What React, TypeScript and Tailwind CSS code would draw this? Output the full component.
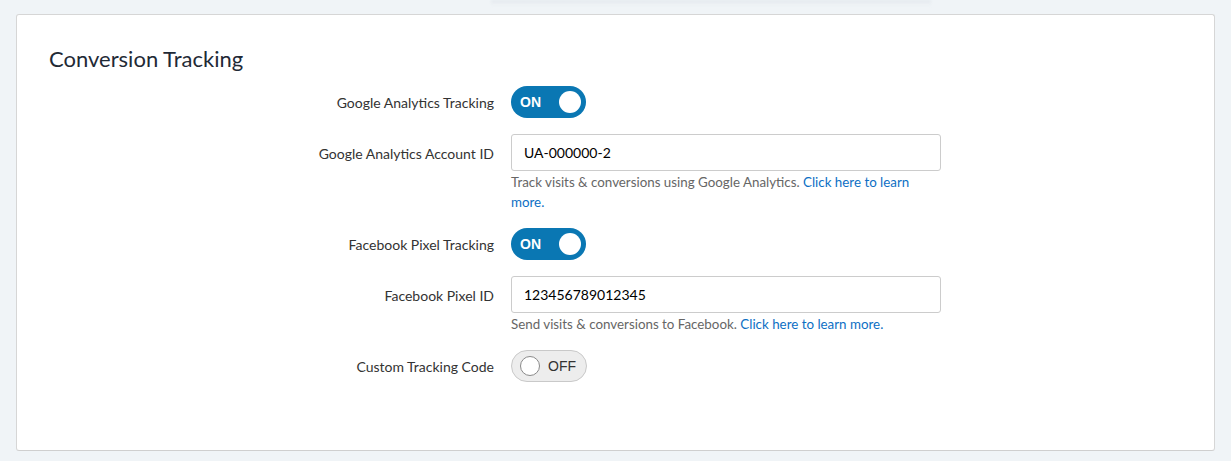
import React from 'react';

const Toggle: React.FC<{ on: boolean }> = ({ on }) => {
  if (on) {
    return (
      <div className="relative flex h-[32px] w-[75px] items-center rounded-full bg-[#0a77b3] pl-[9px]">
        <span className="font-['Liberation_Sans',Arial,sans-serif] text-[14px] font-bold text-white">ON</span>
        <span className="absolute right-[5px] top-[5px] h-[22px] w-[22px] rounded-full bg-white" />
      </div>
    );
  }
  return (
    <div className="relative flex h-[32px] w-[76px] items-center rounded-full border border-[#c9c9c9] bg-[#ededed] pl-[36px]">
      <span className="font-['Liberation_Sans',Arial,sans-serif] text-[14px] text-[#333]">OFF</span>
      <span className="absolute left-[8px] top-[5px] h-[20px] w-[20px] rounded-full border border-[#8a8a8a] bg-white" />
    </div>
  );
};

const Row: React.FC<{ label: string; children: React.ReactNode; h: string }> = ({ label, children, h }) => (
  <div className="grid grid-cols-[445px_1fr] gap-x-[17px]">
    <div className={`flex items-center justify-end pt-[1px] ${h} text-[14px] text-[#333]`}>{label}</div>
    <div>{children}</div>
  </div>
);

const Field: React.FC<{ value: string }> = ({ value }) => (
  <div className="flex h-[37px] w-[430px] items-center rounded-[3px] border border-[#cccccc] bg-white px-[12px] text-[14px] text-black">
    {value}
  </div>
);

export default function App() {
  return (
    <div className="min-h-[461px] bg-[#f0f4f7] px-[16px] pb-[9px] font-['Lato','Open_Sans',sans-serif]">
      <div className="ml-[475px] h-[6px] w-[440px] bg-gradient-to-b from-[#e4e9ee] to-transparent blur-[1px]" />
      <div className="mt-[8px] w-[1199px] rounded-[3px] border border-[#d6d6d6] border-b-[#cfcfcf] bg-white px-[32px] pb-[68px] pt-[30px]">
        <h2 className="text-[22px] leading-7 text-[#1f2a36]">Conversion Tracking</h2>
        <div className="mt-[13px] flex flex-col gap-4">
          <Row label="Google Analytics Tracking" h="h-[32px]">
            <Toggle on />
          </Row>
          <Row label="Google Analytics Account ID" h="h-[37px]">
            <Field value="UA-000000-2" />
            <p className="w-[430px] pt-[1px] text-[13.35px] leading-5 text-[#666]">
              Track visits &amp; conversions using Google Analytics.{' '}
              <a className="text-[#0d6fc4]">Click here to learn more.</a>
            </p>
          </Row>
          <Row label="Facebook Pixel Tracking" h="h-[32px]">
            <Toggle on />
          </Row>
          <Row label="Facebook Pixel ID" h="h-[37px]">
            <Field value="123456789012345" />
            <p className="w-[430px] pt-[1px] text-[13.35px] leading-5 text-[#666]">
              Send visits &amp; conversions to Facebook.{' '}
              <a className="text-[#0d6fc4]">Click here to learn more.</a>
            </p>
          </Row>
          <Row label="Custom Tracking Code" h="h-[32px]">
            <Toggle on={false} />
          </Row>
        </div>
      </div>
    </div>
  );
}
